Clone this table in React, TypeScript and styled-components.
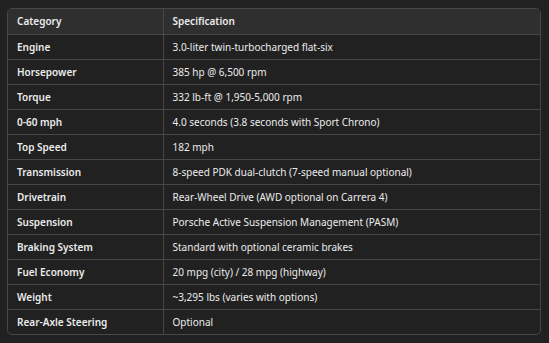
import React from 'react'
import styled, { createGlobalStyle } from 'styled-components'

const GlobalStyle = createGlobalStyle`
  html, body {
    margin: 0;
    padding: 0;
    background: #212121;
  }
  body {
    font-family: 'Noto Sans', 'Open Sans', sans-serif;
    color: #ececec;
  }
`

const Page = styled.div`
  width: 549px;
  height: 343px;
  padding: 8px 8px 0 7px;
  box-sizing: border-box;
`

const Frame = styled.div`
  width: 534px;
  border: 1px solid #474747;
  border-radius: 5px;
  overflow: hidden;
  box-sizing: border-box;
`

const Table = styled.table`
  width: 100%;
  border-collapse: collapse;
  font-size: 10px;
  line-height: 14px;
`

const HeadRow = styled.tr`
  background: #2f2f2f;
`

const Cell = styled.td<{ $first?: boolean; $head?: boolean }>`
  height: 25px;
  padding: 0 0 0 9px;
  box-sizing: border-box;
  text-align: left;
  vertical-align: middle;
  white-space: nowrap;
  font-weight: ${p => (p.$first || p.$head ? 600 : 400)};
  width: ${p => (p.$first ? '155px' : 'auto')};
  border-right: ${p => (p.$first ? '1px solid #474747' : 'none')};
  border-top: ${p => (p.$head ? 'none' : '1px solid #474747')};
`

const specs: [string, string][] = [
  ['Engine', '3.0-liter twin-turbocharged flat-six'],
  ['Horsepower', '385 hp @ 6,500 rpm'],
  ['Torque', '332 lb-ft @ 1,950-5,000 rpm'],
  ['0-60 mph', '4.0 seconds (3.8 seconds with Sport Chrono)'],
  ['Top Speed', '182 mph'],
  ['Transmission', '8-speed PDK dual-clutch (7-speed manual optional)'],
  ['Drivetrain', 'Rear-Wheel Drive (AWD optional on Carrera 4)'],
  ['Suspension', 'Porsche Active Suspension Management (PASM)'],
  ['Braking System', 'Standard with optional ceramic brakes'],
  ['Fuel Economy', '20 mpg (city) / 28 mpg (highway)'],
  ['Weight', '~3,295 lbs (varies with options)'],
  ['Rear-Axle Steering', 'Optional'],
]

export default function App() {
  return (
    <Page>
      <GlobalStyle />
      <Frame>
        <Table>
          <thead>
            <HeadRow>
              <Cell as="th" $first $head>Category</Cell>
              <Cell as="th" $head>Specification</Cell>
            </HeadRow>
          </thead>
          <tbody>
            {specs.map(([k, v]) => (
              <tr key={k}>
                <Cell $first>{k}</Cell>
                <Cell>{v}</Cell>
              </tr>
            ))}
          </tbody>
        </Table>
      </Frame>
    </Page>
  )
}
